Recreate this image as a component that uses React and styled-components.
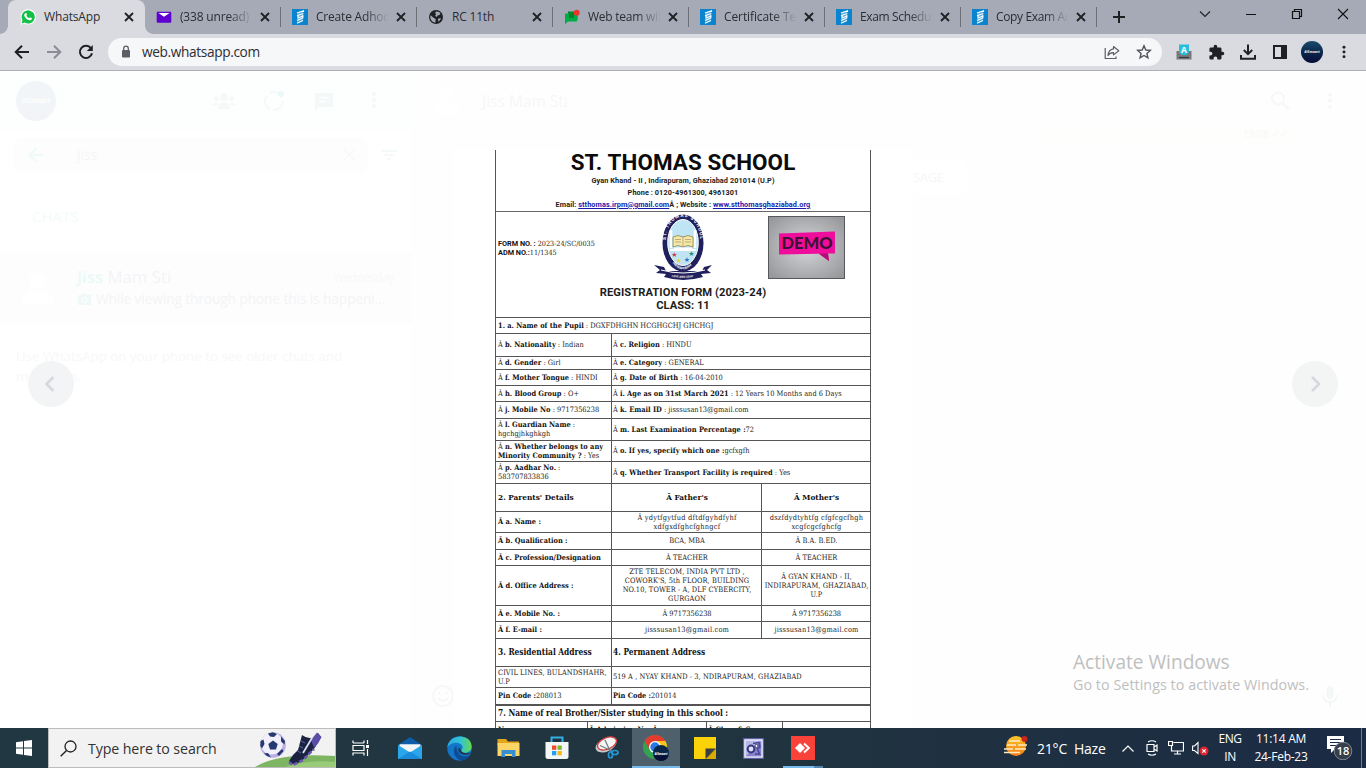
import React from 'react';
import styled, { createGlobalStyle, css } from 'styled-components';

const Global = createGlobalStyle`
  * { box-sizing: border-box; }
  body { margin: 0; background: #fefefe; overflow: hidden; }
`;
const ui = '"Open Sans", "Noto Sans", sans-serif';
const serif = '"DejaVu Serif Condensed", "DejaVu Serif", serif';

const Screen = styled.div`
  width: 1366px; height: 768px; display: flex; flex-direction: column;
  font-family: ${ui}; overflow: hidden; position: relative;
`;

/* ---------- browser ---------- */
const TabStrip = styled.div`
  height: 34px; flex: none; background: #a6aab7; display: flex; padding-left: 8px; align-items: stretch;
`;
const Tab = styled.div`
  width: 136px; flex: none; display: flex; align-items: center; padding: 0 0 0 12px; position: relative;
  ${p => p.$active && css`
    background: #dadbe0; border-radius: 8px 8px 0 0; width: 137px; margin-right: -1px;
    &::before, &::after { content: ''; position: absolute; bottom: 0; width: 8px; height: 8px; }
    &::before { left: -8px; background: radial-gradient(circle at 0 0, transparent 7.5px, #dadbe0 8px); }
    &::after { right: -8px; background: radial-gradient(circle at 100% 0, transparent 7.5px, #dadbe0 8px); }
  `}
  ${p => p.$sep && css`
    &::after { content: ''; position: absolute; right: -1px; top: 7px; height: 20px; width: 1px; background: #6c6f78; }
  `}
`;
const TabTitle = styled.div`
  margin-left: 8px; width: 74px; flex: none; font-size: 12px; line-height: 16px; white-space: nowrap;
  color: #2b2d33; letter-spacing: ${p => p.$ls || 0}px;
  ${p => p.$fade && css`mask-image: linear-gradient(90deg, #000 66%, transparent 98%);`}
`;
const TabClose = styled.div`
  display: flex; margin-left: 2px; width: 18px; justify-content: center;
`;
const NewTab = styled.div`width: 45px; display: flex; align-items: center; justify-content: center;`;
const WindowControls = styled.div`
  margin-left: auto; display: flex; height: 28px; align-items: center;
  svg { width: 46px; }
`;
const Toolbar = styled.div`
  height: 37px; flex: none; background: #dadbe0; border-bottom: 1px solid #adaeb6;
  display: flex; align-items: center; padding: 0 6px;
`;
const ToolCell = styled.div`width: 32px; flex: none; display: flex; align-items: center; justify-content: center;`;
const Omnibox = styled.div`
  flex: 1; height: 28px; border-radius: 14px; background: #f6f7f9; margin: 0 6px;
  display: flex; align-items: center; padding: 0 2px 0 12px;
`;
const Url = styled.div`font-size: 13.7px; line-height: 18px; color: #2c2e33; margin-left: 10px; flex: 1; letter-spacing: -0.37px;`;

/* ---------- faded chat application ---------- */
const Viewport = styled.main`height: 657px; flex: none; position: relative; background: #fefefe; display: flex;`;
const ChatList = styled.section`width: 411px; flex: none; background: #fff; display: flex; flex-direction: column;`;
const ListHeader = styled.header`
  height: 59px; background: #fdfefe; display: flex; align-items: center; padding: 1px 12px 0 16px;
`;
const Avatar = styled.div`
  width: ${p => p.$size}px; height: ${p => p.$size}px; flex: none; border-radius: 50%; overflow: hidden;
  display: flex; align-items: center; justify-content: center;
  background: ${p => p.$ghost ? 'linear-gradient(#f2f5f8 55%, #f3f3f6)' : 'linear-gradient(#174b6c, #0b2548 55%, #080d3a)'};
  color: ${p => p.$ghost ? '#fdfefe' : '#eee'};
  font: italic bold ${p => p.$size / 6.2}px/1 ${ui};
`;
const HeaderIcons = styled.div`margin-left: auto; display: flex; > svg { width: 50px; }`;
const SearchRow = styled.div`height: 49px; display: flex; align-items: center; padding: 0 10px 0 13px; margin-top: 0;`;
const SearchField = styled.div`
  width: 355px; height: 34px; background: #fdfdfd; border-radius: 8px; display: flex; align-items: center; padding: 0 14px 0 15px;
  font-size: 14px; color: #f5f6f6;
  span { margin-left: 33px; flex: 1; }
`;
const FilterIcon = styled.div`margin-left: 13px; display: flex;`;
const SectionLabel = styled.div`height: 72px; padding: 25px 32px 0; font-size: 15px; line-height: 24px; color: #f4fbfa;`;
const ChatRow = styled.div`height: 72px; background: #fdfdfd; display: flex; align-items: center; padding: 2px 17px 0 13px;`;
const Person = styled.div`width: 49px; height: 49px; display: flex; margin-right: 15px;`;
const ChatBody = styled.div`flex: 1; line-height: 22px; white-space: nowrap;`;
const ChatTop = styled.div`display: flex; justify-content: space-between; align-items: center;`;
const ChatName = styled.div`font-size: 16.8px; color: #f3f4f6; b { color: #e9faf6; font-weight: 600; }`;
const Day = styled.div`font-size: 11.7px; letter-spacing: -0.25px; color: #f8f8f9;`;
const Preview = styled.div`font-size: 13.6px; color: #f3f4f5; display: flex; align-items: center; gap: 4px; letter-spacing: -0.05px;`;
const Hint = styled.p`margin: 23px 16px; font-size: 13.4px; line-height: 20px; color: #f7f8f8; width: 340px; letter-spacing: -0.03px;`;
const Conversation = styled.section`flex: 1; display: flex; flex-direction: column;`;
const ConvHeader = styled.header`
  height: 59px; display: flex; align-items: center; padding: 1px 11px 0 16px; font-size: 15.5px; color: #f6f7f7;
  > span { margin-left: 15px; }
`;
const Bubble = styled.div`
  align-self: flex-end; width: 248px; margin-right: 72px; height: 12px; background: #fefefc; text-align: right; padding-right: 7px;
  font-size: 10px; line-height: 8px; color: #f8f8f6;
`;
const Notice = styled.div`
  margin: 18px 0 0 502px; width: 54px; height: 34px; line-height: 35px; background: #fff; border-radius: 0 8px 8px 0;
  font-size: 12.5px; color: #f5f6f8;
`;
const ConvFooter = styled.footer`
  margin-top: auto; height: 64px; display: flex; justify-content: space-between; align-items: center; padding: 0 24px 0 20px;
`;

/* ---------- media viewer ---------- */
const Viewer = styled.div`
  position: absolute; inset: 0; display: flex; justify-content: space-between; align-items: flex-start; padding: 0 28px;
`;
const NavButton = styled.div`
  width: 46px; height: 46px; margin-top: 290px; border-radius: 50%; background: ${p => p.$bg};
  display: flex; align-items: center; justify-content: center;
`;
const Photo = styled.div`width: 460px; height: 578px; margin-top: 79px; background: #fff; display: flex; justify-content: center; overflow: hidden;`;
const Sheet = styled.div`
  width: 376px; height: 600px; flex: none; border: solid #555; border-width: 0 1px; color: #1c1c1c;
  font: 7.4px/9px ${serif}; white-space: nowrap; b { color: #111; }
`;
const Letterhead = styled.div`
  height: 62px; border-bottom: 1px solid #666; text-align: center; font-family: Roboto, sans-serif; font-weight: 700;
`;
const SchoolName = styled.div`font-size: 22.4px; line-height: 24px; color: #0c0c0c; letter-spacing: 0.1px; height: 25px;`;
const HeadLine = styled.div`
  font-size: 7.3px; line-height: 12px; letter-spacing: 0.08px; height: 11.8px;
  a { color: #1a1aae; text-decoration: underline; }
`;
const FormHead = styled.div`
  height: 106px; border-bottom: 1px solid #555; display: flex; flex-direction: column; font-family: Roboto, sans-serif;
`;
const IdRow = styled.div`display: flex; height: 74px; align-items: flex-start;`;
const Ids = styled.div`
  width: 157px; padding: 27px 0 0 2px; font-size: 7.2px; line-height: 9px; font-family: ${serif};
  div { height: 9px; }
  b { font-family: Roboto, sans-serif; font-size: 7.3px; }
`;
const EmblemBox = styled.div`padding-top: 1px; display: flex;`;
const DemoBox = styled.div`margin-left: 55px; margin-top: 4px; display: flex;`;
const FormTitle = styled.div`text-align: center; font-weight: 700; font-size: 11.2px; line-height: 13px; letter-spacing: ${p => p.$ls}px;`;
const Row = styled.div`
  display: grid; grid-template-columns: ${p => p.$cols}; height: ${p => p.$h}px;
  border-bottom: ${p => p.$thick ? 2 : 1}px solid #555;
`;
const Cell = styled.div`
  display: flex; flex-direction: column; justify-content: center; min-width: 0; padding: ${p => p.$center ? '0 0 1px' : '0 0 1px 2px'};
  text-align: ${p => p.$center ? 'center' : 'left'}; letter-spacing: ${p => p.$ls || 0}px;
  font-size: ${p => p.$fs || 7.4}px;
  > span { margin: 0 -4px 0 0; }
  ${p => p.$center && css`> span { margin: 0 -4px; }`}
  & + & { border-left: 1px solid #555; padding-left: ${p => p.$center ? 0 : 1}px; }
`;
const Watermark = styled.div`
  position: absolute; left: 1073px; top: 650px; color: #bfbfbf; white-space: nowrap;
  font-size: 14.3px; line-height: 20px; letter-spacing: 0.05px;
  strong { display: block; font-weight: 400; font-size: 19.1px; line-height: 25px; letter-spacing: 0; }
`;

/* ---------- taskbar ---------- */
const Taskbar = styled.footer`
  height: 40px; flex: none; display: flex; background: linear-gradient(90deg, #213843, #20343f 55%, #1c2b44); color: #fff;
`;
const Start = styled.div`width: 48px; display: flex; align-items: center; justify-content: center;`;
const SearchBox = styled.div`
  width: 288px; background: #f2f2f2; border: 1px solid #bcbcbc; display: flex; align-items: center; padding-left: 11px;
  color: #333; font-size: 14.2px; overflow: hidden;
  span { margin-left: 11px; flex: 1; letter-spacing: -0.1px; white-space: nowrap; }
`;
const Apps = styled.div`display: flex; gap: 1.1px; padding-left: 1px;`;
const TaskButton = styled.div`
  width: 48px; display: flex; align-items: center; justify-content: center; position: relative;
  background: ${p => p.$active ? '#4e606b' : 'none'};
  ${p => p.$line && css`
    &::after { content: ''; position: absolute; bottom: 0; height: 2px; left: ${p.$active ? 0 : 4}px; width: ${p.$active ? 48 : 40}px;
      background: ${p.$active ? '#76b9ed' : 'linear-gradient(90deg, #76b9ed 31px, #5485ae 31px)'}; }
  `}
`;
const Tray = styled.div`margin-left: auto; display: flex; align-items: center; font-size: 12px;`;
const Weather = styled.div`display: flex; align-items: center; font-size: 14px; width: 112px; gap: 9px; white-space: nowrap; letter-spacing: -0.2px;`;
const TrayIcon = styled.div`width: ${p => p.$w}px; display: flex; justify-content: center;`;
const Stack = styled.div`
  width: ${p => p.$w}px; text-align: center; line-height: 18px; font-size: 12px; letter-spacing: ${p => p.$ls}px; white-space: nowrap;
`;
const Notifications = styled.div`width: 47px; height: 40px; display: flex; justify-content: center; align-items: center; padding-left: 4px;`;
const Peek = styled.div`width: 5px; height: 40px; border-left: 1px solid #707c8c;`;

/* ---------- drawings ---------- */
const X = ({ c = '#1f2023', s = 8, w = 1.8 }) => (
  <svg width={s} height={s} viewBox="0 0 8 8" overflow="visible"><path d="M0 0 8 8M8 0 0 8" stroke={c} strokeWidth={w} /></svg>
);
const WhatsAppIcon = () => (
  <svg width="16" height="16" viewBox="0 0 16 16">
    <path d="M.4 15.7 1.6 11.6A7.7 7.7 0 1 1 4.600 14.600Z" fill="#fff" />
    <path d="M1.600 14.500 2.500 11.300A6.600 6.600 0 1 1 4.800 13.600Z" fill="#13c047" />
    <path d="M5.300 4.200c.5-.4 1-.3 1.200.2l.5 1.200c.1.400-.5.900-.6 1.100.6 1.200 1.500 2 2.700 2.500.3-.1.700-1 1.100-.8l1.400.7c.5.300.2 1.200-.2 1.600-.5.500-1.300.7-2 .6-2.700-.6-4.700-2.700-5.200-4.700-.1-.8.400-1.800 1.100-2.400Z" fill="#fff" />
  </svg>
);
const MailFav = () => (
  <svg width="16" height="16" viewBox="0 0 16 16"><rect x=".7" y="2.700" width="14.600" height="11" rx="1" fill="#5f01d1" /><path d="M2.500 4h11L8 7.800Z" fill="#fff" /></svg>
);
const BookFav = () => (
  <svg width="16" height="16" viewBox="0 0 16 16"><rect width="16" height="16" fill="#0a84cf" />
    <path d="M5.300 4.800V3.500L11.300 1.700V11L5.300 14Z" fill="#4ba8e0" />
    <path d="M5 4 11.500 1.900V3M5 6.700 11.300 4.500M6.200 5.600V8M5.300 9.300 11 7M5 11.500 10.800 9M5 14.200 11 11.500M10.800 6V9" stroke="#fff" strokeWidth="1.150" fill="none" /></svg>
);
const GlobeFav = () => (
  <svg width="16" height="16" viewBox="0 0 16 16"><circle cx="8" cy="8" r="7" fill="#202124" />
    <path d="M2.600 6.300 5.500 8.700 7.700 9.900 7.300 13.600C4.500 13.200 2.300 10.600 2.300 7.900ZM8.200 2.600c1.500-.2 3.300.5 4.300 1.900L11.400 6.100 9.500 6.600 8.900 8 7 6.700 8.300 5.200 7 4ZM10 9.700 12.900 9.100c-.4 1.700-1.400 3-2.600 3.700Z" fill="#a6aab7" /></svg>
);
const ChatFav = () => (
  <svg width="16" height="16" viewBox="0 0 16 16"><path d="M4 2.500h9.500v8.500H4Z" fill="#00832d" /><path d="M1 4.500h12v8H4L1 15.300Z" fill="#00ac47" /><path d="M5 3h5v6H5Z" fill="#00832d" /><circle cx="12.700" cy="3.700" r="3" fill="#e8372c" /></svg>
);
const Arrow = ({ c, flip }) => (
  <svg width="16" height="16" viewBox="0 0 16 16"><path d={flip ? 'M1 8h13M8 1.700 14.300 8 8 14.300' : 'M15 8H2M8 1.700 1.700 8 8 14.300'} fill="none" stroke={c} strokeWidth="2" /></svg>
);
const Dots = ({ c, s = 16 }) => (
  <svg width={s} height={s} viewBox="0 0 16 16"><g fill={c}><circle cx="8" cy="2.500" r="1.700" /><circle cx="8" cy="8" r="1.700" /><circle cx="8" cy="13.500" r="1.700" /></g></svg>
);
const Chevron = ({ right, c }) => (
  <svg width="16" height="18" viewBox="0 0 16 18"><path d={right ? 'M5 2 12 9 5 16' : 'M10.500 2 3.500 9 10.500 16'} fill="none" stroke={c} strokeWidth="2.600" /></svg>
);
const PersonIcon = () => (
  <svg width="49" height="49" viewBox="0 0 49 49"><circle cx="24.500" cy="24.500" r="24.500" fill="#fdfdfd" /><circle cx="24.500" cy="17" r="8" fill="#fff" /><path d="M8 40c0-9 7-13 16.500-13S41 31 41 40" fill="#fff" /></svg>
);
const Emblem = () => (
  <svg width="60" height="67" viewBox="0 0 60 67">
    <path d="M1 52 11 54 13 58 49 58 51 54 59 52 54 57 58 60 48 61 50 64Q30 70 11 64L13 61 3 60 7 57Z" fill="#20205e" />
    <path d="M8 57Q30 63 52 57" fill="none" stroke="#fff" strokeWidth="1" />
    <ellipse cx="30" cy="30" rx="20.500" ry="28.500" fill="#20205e" />
    <ellipse cx="30" cy="29.500" rx="15.300" ry="23" fill="#bfe5f5" stroke="#fff" />
    <path id="arcTop" d="M13 36C8-7 52-7 47 36" fill="none" />
    <path id="arcLow" d="M15 43Q30 70 45 43" fill="none" />
    <path id="ribbon" d="M12 62.500Q30 67 48 62.500" fill="none" />
    <g fill="#fff" fontFamily="Roboto, sans-serif" fontWeight="700">
      <text fontSize="4.600"><textPath href="#arcTop" startOffset="9" textLength="63">ST. THOMAS SCHOOL</textPath></text>
      <text fontSize="3.400"><textPath href="#arcLow" startOffset="8">INDIRAPURAM</textPath></text>
      <text fontSize="2.800"><textPath href="#ribbon" startOffset="7">LOVE AND LIGHT</textPath></text>
    </g>
    <path d="M18 17v18M42 17v18" stroke="#fff" strokeWidth="2.500" />
    <path d="M20 24Q25 21 30 24Q35 21 40 24V34Q35 31 30 34Q25 31 20 34Z" fill="#f6e7a6" stroke="#8c8350" strokeWidth=".8" />
    <path d="M30 24v10M22 26.500h6M22 29h6M32 26.500h6M32 29h6" stroke="#938963" strokeWidth=".6" />
    <path d="M17 37H43M21 35.500h18" stroke="#fff" strokeWidth="2" />
    <g fontSize="7" fontFamily="DejaVu Sans, sans-serif" textAnchor="middle">
      <text x="21.500" y="43.500" fill="#cf3b48">★</text><text x="38.500" y="43" fill="#2c8b6b">★</text>
      <text x="26" y="49.500" fill="#e4d33a">★</text><text x="34" y="49" fill="#2b72c4">★</text>
    </g>
  </svg>
);
const Demo = () => (
  <svg width="77" height="63" viewBox="0 0 77 63">
    <defs><radialGradient id="demoBg" cx=".5" cy=".5" r=".65"><stop offset="0" stopColor="#d4d6d8" /><stop offset="1" stopColor="#96989b" /></radialGradient></defs>
    <rect x=".5" y=".5" width="76" height="62" fill="url(#demoBg)" stroke="#56585a" />
    <path d="M11 17.500 67 15.500V37.500H60L61 45 51 37.800 11 38.500Z" fill="#ef0d9c" />
    <path d="M51 37.800 61 45 60 37.500Z" fill="#b50b78" />
    <text x="39" y="33.300" textAnchor="middle" textLength="51" lengthAdjust="spacingAndGlyphs" fontFamily="Lato, sans-serif" fontWeight="900" fontSize="17.500" fill="#3d1135">DEMO</text>
  </svg>
);
const SearchArt = () => (
  <svg width="80" height="38" viewBox="0 0 80 38">
    <path d="M0 38Q24 23 80 27V38Z" fill="#7db563" /><path d="M30 38Q54 30 80 33V38Z" fill="#9acb78" />
    <circle cx="18" cy="16" r="12.800" fill="#b9aee4" /><circle cx="16.800" cy="14.500" r="11" fill="#f0effb" />
    <g fill="#24396f"><path d="M18 11.500 22.700 15 21 20.500H15L13.300 15Z" /><path d="M13 4.500 18 3.200 22 5 19 8 15 7.500Z" /><path d="M5.500 12 8.500 10.500 9.500 15 7 19.500 5.300 17Z" /><path d="M26 7.500 30 12 29.500 15.500 26 12.500Z" /><path d="M9 24.500 13 24 16 28.500 12 27Z" /><path d="M22 25 27 20 28.500 22 24 27Z" /></g>
    <path d="M34 32Q37 26 43 21L47 6Q52 10 58 9L63 4 66 8Q63 14 59 20L50 29Q42 36 37 35Z" fill="#1b2340" />
    <path d="M56 11 62 3.500 66.500 8Q64 14 59 19Z" fill="#5a4ca8" />
    <path d="M57 9 48 24" stroke="#d8dcf5" strokeWidth="1.800" />
    <path d="M46 12 50 14M44 17 48 19M42 21.500 46 24" stroke="#5c68a8" strokeWidth="1" />
    <path d="M34 33 38 36 48 31 59 20" stroke="#6c55b5" strokeWidth="2.500" fill="none" strokeDasharray="4 2" />
  </svg>
);
const TaskView = () => (
  <svg width="18" height="16" viewBox="0 0 18 16"><path d="M1 .5V3M12 .5V3M1 3H12M1 5.500H12V10.500H1ZM1 15.500V13H12V15.500M15.500 0V4M15.500 9V16" stroke="#fff" strokeWidth="1.200" fill="none" /><rect x="14" y="5" width="3" height="3" fill="#fff" /></svg>
);
const MailApp = () => (
  <svg width="24" height="24" viewBox="0 0 24 24"><path d="M0 9 12 1 24 9V13H0Z" fill="#0f5cab" /><path d="M1.500 8.500H22.500V12L12 18 1.500 12Z" fill="#eef1f4" /><path d="M0 9V23H24V9L12 16.500Z" fill="#2aa6ea" /><path d="M1.500 8.500H22.500L12 15.800Z" fill="#f4f5f7" /><path d="M0 23 12 15.500 24 23Z" fill="#1b8bdc" /></svg>
);
const Edge = () => (
  <svg width="25" height="25" viewBox="0 0 24 24">
    <defs><linearGradient id="eg" x1="0" x2="1"><stop offset="0" stopColor="#2ca9e3" /><stop offset=".55" stopColor="#33c3d4" /><stop offset="1" stopColor="#66d84e" /></linearGradient></defs>
    <circle cx="12" cy="12" r="11.700" fill="#1376c8" />
    <path d="M.3 11C1.500-3 23.700-3 23.700 10c0 4-3.200 6-6.500 6-2.200 0-3.500-.8-3.500-2 0-.8 1.300-1.300 1.300-3C15 5.500 4 4.500.3 11Z" fill="url(#eg)" />
    <path d="M9 9C4 13 7 22 14 23.500 18.500 22.800 21 20.500 22 18.500 13 21.500 9.500 16 9 9Z" fill="#0d4d98" />
    <path d="M11.500 10.500c-1.500 3 0 6.500 5 7.500 3.500.3 5.500-1 6.500-2.500C20 17 14 17 13.500 14Z" fill="#20343f" />
  </svg>
);
const Folder = () => (
  <svg width="23" height="20" viewBox="0 0 23 20"><path d="M.5 1H9L11 3.500H22V7H.5Z" fill="#e3a51c" /><path d="M.5 5H22.500V18H.5Z" fill="#fbd667" /><path d="M4.500 19V12H18.500V19H15V16H8V19Z" fill="#368fd3" /></svg>
);
const Store = () => (
  <svg width="24" height="24" viewBox="0 0 24 24"><path d="M6.500 6V1.500H17.500V6" fill="none" stroke="#33afe2" strokeWidth="2" /><path d="M.5 6H23.500V20.500Q23.500 23 21 23H3Q.5 23 .5 20.500Z" fill="#f3f5f7" /><path d="M7 9.500h4.300v4.300H7Z" fill="#f04d26" /><path d="M12.500 9.500h4.300v4.300h-4.300Z" fill="#7fb92c" /><path d="M7 15h4.300v4.300H7Z" fill="#22a2e9" /><path d="M12.500 15h4.300v4.300h-4.300Z" fill="#f9b911" /></svg>
);
const Snip = () => (
  <svg width="25" height="24" viewBox="0 0 25 24"><ellipse cx="12" cy="9" rx="11" ry="6.500" transform="rotate(-24 12 9)" fill="#c7cdd0" /><ellipse cx="13" cy="7.500" rx="10" ry="5.700" transform="rotate(-24 13 7.500)" fill="#f4f5f5" stroke="#d2403f" strokeWidth="1.400" /><path d="M11 4 16.500 16M6 9.500 18 15" stroke="#777c82" strokeWidth="1.300" /><ellipse cx="16.500" cy="19" rx="2" ry="3" fill="none" stroke="#2496d3" strokeWidth="1.700" /><ellipse cx="21" cy="16.500" rx="3" ry="2" fill="none" stroke="#2496d3" strokeWidth="1.700" /></svg>
);
const Chrome = () => (
  <svg width="26" height="26" viewBox="0 0 26 26">
    <circle cx="12" cy="12" r="12" fill="#32a350" /><path d="M1.600 6A12 12 0 0 1 22.400 6H12L6.800 15Z" fill="#e33b2e" /><path d="M12 6H22.400A12 12 0 0 1 12 24L17.200 15Z" fill="#fbc31d" /><circle cx="12" cy="12" r="6" fill="#fff" /><circle cx="12" cy="12" r="4.700" fill="#2a78e6" />
    <circle cx="18" cy="18" r="8" fill="#092849" /><path d="M10.500 20.500h15A8 8 0 0 1 10.500 20.500Z" fill="#071036" /><text x="18" y="19.500" textAnchor="middle" fontSize="3" fontStyle="italic" fontWeight="700" fill="#fff" fontFamily="Open Sans">#iSmaart</text>
  </svg>
);
const Notes = () => <svg width="22" height="22" viewBox="0 0 22 22"><path d="M0 0H22V11.500L12 22H0Z" fill="#fbd20a" /><path d="M11.500 22V11.500H22Z" fill="#3a3f42" /><path d="M12 22 22 11.500V22Z" fill="#dca900" /></svg>;
const Gear = () => (
  <svg width="21" height="21" viewBox="0 0 21 21"><rect x=".7" y=".7" width="19.600" height="19.600" fill="#b5b8e6" stroke="#6460ab" strokeWidth="1.200" /><path d="M2 19H19V2Z" fill="#8583c9" /><rect x="2" y="2" width="17" height="17" fill="none" stroke="#f2f2fd" strokeWidth="1.200" /><circle cx="8" cy="11" r="3.400" fill="#dfe1f8" stroke="#38367f" strokeWidth="2" /><path d="M10 5.500 16 4.500 17 9 14.500 11 16.500 16 12 16" fill="none" stroke="#4b489a" strokeWidth="1.600" /><circle cx="13.500" cy="8" r="1.600" fill="#f3f4fe" stroke="#403d8d" /></svg>
);
const AnyDesk = () => <svg width="24" height="24" viewBox="0 0 24 24"><rect width="24" height="24" fill="#f9423a" /><path d="M4 12 9 7 14 12 9 17Z" fill="#fff" /><path d="M13 7.500 17.800 12 13 16.500" fill="none" stroke="#fff" strokeWidth="2" /></svg>;

const tabs = [
  ['WhatsApp', WhatsAppIcon, -0.15], ['(338 unread) -', MailFav, -0.18, 1], ['Create Adhoc', BookFav, -0.2, 1], ['RC 11th', GlobeFav, -0.2],
  ['Web team wit', ChatFav, -0.25, 1], ['Certificate Ter', BookFav, -0.1, 1], ['Exam Schedul', BookFav, -0.35, 1], ['Copy Exam Ac', BookFav, -0.35, 1],
];

const Two = '115px 1fr';
const Three = '115px 150px 1fr';
const A = 'Â ';

const FormRows = () => (
  <>
    <Row $cols="1fr" $h={16}><Cell><span><b>1. a. Name of the Pupil</b> : DGXFDHGHN HCGHGCHJ GHCHGJ</span></Cell></Row>
    {[
      [23, [<span>{A}<b>b. Nationality</b> : Indian</span>], [<span>{A}<b>c. Religion</b> : HINDU</span>]],
      [13, [<span>{A}<b>d. Gender</b> : Girl</span>], [<span>{A}<b>e. Category</b> : GENERAL</span>]],
      [16, [<span>{A}<b>f. Mother Tongue</b> : HINDI</span>], [<span>{A}<b>g. Date of Birth</b> : 16-04-2010</span>]],
      [16, [<span>{A}<b>h. Blood Group</b> : O+</span>], [<span>{A}<b>i. Age as on 31st March 2021</b> : 12 Years 10 Months and 6 Days</span>]],
      [17, [<span>{A}<b>j. Mobile No</b> : 9717356238</span>], [<span>{A}<b>k. Email ID</b> : jisssusan13@gmail.com</span>]],
      [22, [<span>{A}<b>l. Guardian Name</b> :</span>, <span>hgchgjhkghkgh</span>], [<span>{A}<b>m. Last Examination Percentage :</b>72</span>]],
      [21, [<span>{A}<b>n. Whether belongs to any</b></span>, <span><b>Minority Community ?</b> : Yes</span>], [<span>{A}<b>o. If yes, specify which one :</b>gcfxgfh</span>]],
      [22, [<span>{A}<b>p. Aadhar No.</b> :</span>, <span>583707833836</span>], [<span>{A}<b>q. Whether Transport Facility is required</b> : Yes</span>]],
    ].map(([h, l, r], i) => (
      <Row key={i} $cols={Two} $h={h}>
        <Cell>{React.Children.toArray(l)}</Cell><Cell>{React.Children.toArray(r)}</Cell>
      </Row>
    ))}
    <Row $cols={Three} $h={28}>
      <Cell $fs={8.2}><b>2. Parents' Details</b></Cell><Cell $fs={8.2} $center><b>Â Father's</b></Cell><Cell $fs={8.2} $center><b>Â Mother's</b></Cell>
    </Row>
    {[
      [21, 'a. Name :', ['Â ydytfgytfud dftdfgyhdfyhf', 'xdfgxdfghcfghngcf'], ['dszfdydtyhtfg cfgfcgcfhgh', 'xcgfcgcfghcfg'], 0.22],
      [17, 'b. Qualification :', ['BCA, MBA'], ['Â B.A. B.ED.']],
      [16, 'c. Profession/Designation', ['Â TEACHER'], ['Â TEACHER']],
      [40, 'd. Office Address :', ['ZTE TELECOM, INDIA PVT LTD ,', 'COWORK\'S, 5th FLOOR, BUILDING', 'NO.10, TOWER - A, DLF CYBERCITY,', 'GURGAON'], ['Â GYAN KHAND - II,', 'INDIRAPURAM, GHAZIABAD,', 'U.P'], 0.08],
      [16, 'e. Mobile No. :', ['Â 9717356238'], ['Â 9717356238']],
      [17, 'f. E-mail :', ['jisssusan13@gmail.com'], ['jisssusan13@gmail.com'], 0.18],
    ].map(([h, label, f, m, ls]) => (
      <Row key={label} $cols={Three} $h={h}>
        <Cell><b>Â {label}</b></Cell>
        <Cell $center $ls={ls}>{f.map(t => <span key={t}>{t}</span>)}</Cell>
        <Cell $center $ls={ls}>{m.map(t => <span key={t}>{t}</span>)}</Cell>
      </Row>
    ))}
    <Row $cols={Two} $h={28}><Cell $fs={8.3}><b>3. Residential Address</b></Cell><Cell $fs={8.3}><b>4. Permanent Address</b></Cell></Row>
    <Row $cols={Two} $h={21}><Cell $ls={0.07}><span>CIVIL LINES, BULANDSHAHR,</span><span>U.P</span></Cell><Cell $ls={0.07}>519 A , NYAY KHAND - 3, NDIRAPURAM, GHAZIABAD</Cell></Row>
    <Row $cols={Two} $h={18} $thick><Cell><span><b>Pin Code :</b>208013</span></Cell><Cell><span><b>Pin Code :</b>201014</span></Cell></Row>
    <Row $cols="1fr" $h={16}><Cell $fs={8.3}><b>7. Name of real Brother/Sister studying in this school :</b></Cell></Row>
    <Row $cols="91px 119px 76px 1fr" $h={16}><Cell><b>Name :</b></Cell><Cell><b>Â Admission No. Â :</b></Cell><Cell><b>Â Class &amp; Sec. :</b></Cell><Cell /></Row>
  </>
);

export default function App() {
  const g = '#f4f8f8';
  return (
    <Screen>
      <Global />
      <TabStrip>
        {tabs.map(([t, Icon, ls, fade], i) => (
          <Tab key={t} $active={i === 0} $sep={i > 0}>
            <Icon /><TabTitle $ls={ls} $fade={fade}>{t}</TabTitle><TabClose><X /></TabClose>
          </Tab>
        ))}
        <NewTab><svg width="12" height="12" viewBox="0 0 12 12"><path d="M6 0V12M0 6H12" stroke="#1f2023" strokeWidth="2" /></svg></NewTab>
        <WindowControls>
          <svg height="12" viewBox="-23 -6 46 12"><path d="M-5-2.500 0 2.500 5-2.500" fill="none" stroke="#1f2023" strokeWidth="1.100" /></svg>
          <svg height="12" viewBox="-23 -6 46 12"><path d="M-5 .5H5" stroke="#111" /></svg>
          <svg height="12" viewBox="-23 -6 46 12"><path d="M-4.500-2.500H2.500V4.500H-4.500ZM-2.500-2.500V-4.500H4.500V2.500H2.500" fill="none" stroke="#111" strokeWidth="1.200" /></svg>
          <svg height="12" viewBox="-23 -6 46 12"><path d="M-5-5 5 5M5-5-5 5" stroke="#111" strokeWidth="1.100" /></svg>
        </WindowControls>
      </TabStrip>
      <Toolbar>
        <ToolCell><Arrow c="#1f2023" /></ToolCell>
        <ToolCell><Arrow c="#8b8d94" flip /></ToolCell>
        <ToolCell><svg width="16" height="16" viewBox="0 0 16 16"><path d="M13 4.300A6.100 6.100 0 1 0 14 9.300" fill="none" stroke="#1f2023" strokeWidth="2" /><path d="M14.800 1V7H8.800Z" fill="#1f2023" /></svg></ToolCell>
        <Omnibox>
          <svg width="12" height="14" viewBox="0 0 12 14"><rect x="2" y="5" width="8" height="7.500" rx="1" fill="#5b5e64" /><path d="M3.700 5V3.500a2.300 2.300 0 0 1 4.600 0V5" fill="none" stroke="#5b5e64" strokeWidth="1.300" /></svg>
          <Url>web.whatsapp.com</Url>
          <ToolCell><svg width="16" height="16" viewBox="0 0 16 16"><path d="M1.200 4V14.500H12V12.500" fill="none" stroke="#5b5e64" strokeWidth="1.200" /><path d="M9.500 2.500 14.800 6.700 9.500 10.900V8.700Q6 8.500 4 11.500 4.700 5.500 9.500 4.900Z" fill="none" stroke="#5b5e64" strokeWidth="1.200" strokeLinejoin="round" /></svg></ToolCell>
          <ToolCell><svg width="16" height="16" viewBox="0 0 16 16"><path d="M8 1.800 9.800 6 14.300 6.400 10.900 9.400 11.900 13.900 8 11.500 4.100 13.900 5.100 9.400 1.700 6.400 6.200 6Z" fill="none" stroke="#4f5258" strokeWidth="1.400" /></svg></ToolCell>
        </Omnibox>
        <ToolCell><svg width="16" height="16" viewBox="0 0 16 16"><path d="M.5 7H15.500V15.500H.5Z" fill="#77797d" /><path d="M3 .500H13V8L10.500 11H5.500L3 8Z" fill="#29bfdc" /><text x="8" y="8.700" textAnchor="middle" fontSize="8.500" fontWeight="700" fill="#fff" fontFamily="Open Sans">A</text><path d="M3 13.500H13" stroke="#35373a" strokeWidth="1.200" /></svg></ToolCell>
        <ToolCell><svg width="17" height="17" viewBox="0 0 24 24"><path d="M20.500 11H19V7a2 2 0 0 0-2-2h-4V3.500a2.500 2.500 0 0 0-5 0V5H4a2 2 0 0 0-2 2v3.800h1.500a2.700 2.700 0 0 1 0 5.400H2V20a2 2 0 0 0 2 2h3.800v-1.500a2.700 2.700 0 0 1 5.400 0V22H17a2 2 0 0 0 2-2v-4h1.500a2.500 2.500 0 0 0 0-5Z" fill="#1f2023" /></svg></ToolCell>
        <ToolCell><svg width="16" height="16" viewBox="0 0 16 16"><path d="M8 .500V10M3.800 6 8 10.200 12.200 6M1 11V14.800H15V11" fill="none" stroke="#1f2023" strokeWidth="2" /></svg></ToolCell>
        <ToolCell><svg width="14" height="14" viewBox="0 0 14 14"><rect x="1" y="1" width="12" height="12" fill="none" stroke="#1f2023" strokeWidth="2" /><path d="M8 1H13V13H8Z" fill="#1f2023" /></svg></ToolCell>
        <ToolCell><Avatar $size={22}>#iSmaart</Avatar></ToolCell>
        <ToolCell><Dots c="#1f2023" s={14} /></ToolCell>
      </Toolbar>

      <Viewport>
        <ChatList>
          <ListHeader>
            <Avatar $size={40} $ghost>#iSmaart</Avatar>
            <HeaderIcons>
              <svg height="20" viewBox="-25 -10 50 20"><g fill={g}><circle cy="-4" r="3.700" /><circle cx="-7.500" cy="-2.500" r="2.300" /><circle cx="7.500" cy="-2.500" r="2.300" /><path d="M-6.500 8Q-6 1.500 0 1.500T6.500 8ZM-12 4.500Q-11 1.500-6 2L-8 4.500ZM12 4.500Q11 1.500 6 2L8 4.500Z" /></g></svg>
              <svg height="20" viewBox="-25 -10 50 20"><circle r="9" fill="none" stroke={g} strokeWidth="1.800" strokeDasharray="15 3.850" /><circle cx="7" cy="-7" r="3" fill="#e9f8f8" /></svg>
              <svg height="20" viewBox="-25 -10 50 20"><path d="M-9-8H9V6H-5L-9 10Z" fill={g} /><path d="M-5-3.500H5M-5 .500H2" stroke="#fff" strokeWidth="1.500" /></svg>
              <svg height="20" viewBox="-25 -10 50 20"><g fill={g}><circle cy="-7" r="2" /><circle cy="-1" r="2" /><circle cy="5" r="2" /></g></svg>
            </HeaderIcons>
          </ListHeader>
          <SearchRow>
            <SearchField><Arrow c="#eefaf8" /><span>jiss</span><X c="#f6f7f7" s={10} w={1} /></SearchField>
            <FilterIcon><svg width="16" height="10" viewBox="0 0 16 10"><path d="M0 1H16M3 5H13M6.500 9H9.500" stroke="#f2f9f8" strokeWidth="1.500" /></svg></FilterIcon>
          </SearchRow>
          <SectionLabel>CHATS</SectionLabel>
          <ChatRow>
            <Person><PersonIcon /></Person>
            <ChatBody>
              <ChatTop><ChatName><b>Jiss</b> Mam Sti</ChatName><Day>Wednesday</Day></ChatTop>
              <Preview>
                <svg width="15" height="13" viewBox="0 0 15 13"><path d="M1 2H4L5.500.500H9.500L11 2H14V12H1Z" fill="#f1f9f8" /><circle cx="7.500" cy="7" r="2.600" fill="none" stroke="#fff" /></svg>
                While viewing through phone this is happeni...
              </Preview>
            </ChatBody>
          </ChatRow>
          <Hint>Use WhatsApp on your phone to see older chats and messages.</Hint>
        </ChatList>
        <Conversation>
          <ConvHeader>
            <svg width="40" height="40" viewBox="0 0 49 49"><circle cx="24.500" cy="17" r="8" fill="#fff" /><path d="M8 40c0-9 7-13 16.500-13S41 31 41 40" fill="#fff" /></svg>
            <span>Jiss Mam Sti</span>
            <HeaderIcons>
              <svg height="20" viewBox="-25 -10 50 20"><circle cx="-2" cy="-2.500" r="6" fill="none" stroke="#f6f8f8" strokeWidth="2" /><path d="M2 2 9 8.500" stroke="#f6f8f8" strokeWidth="2.500" /></svg>
              <svg height="20" viewBox="-25 -10 50 20"><g fill="#f6f8f8"><circle cy="-6.500" r="2" /><circle cy="-.500" r="2" /><circle cy="5.500" r="2" /></g></svg>
            </HeaderIcons>
          </ConvHeader>
          <Bubble>13:08 ✓✓</Bubble>
          <Notice>SAGE</Notice>
          <ConvFooter>
            <svg width="24" height="24" viewBox="0 0 24 24" fill="none" stroke="#f6f8f8" strokeWidth="2"><circle cx="12" cy="12" r="10" /><path d="M7 14Q12 20 17 14M8 8v2M16 8v2" /></svg>
            <svg width="24" height="24" viewBox="0 0 24 24" fill="none" stroke="#f4f7f7" strokeWidth="1.800"><rect x="9.500" y="3" width="5" height="11" rx="2.500" fill="#f6f8f8" /><path d="M5 11Q5 18 12 18T19 11M12 18V23" /></svg>
          </ConvFooter>
        </Conversation>

        <Viewer>
          <NavButton $bg="#f3f4f6"><Chevron c="#d5dade" /></NavButton>
          <Photo>
            <Sheet>
              <Letterhead>
                <SchoolName>ST. THOMAS SCHOOL</SchoolName>
                <HeadLine>Gyan Khand - II , Indirapuram, Ghaziabad 201014 (U.P)</HeadLine>
                <HeadLine>Phone : 0120-4961300, 4961301</HeadLine>
                <HeadLine><span>Email: <a>stthomas.irpm@gmail.com</a>Â ; Website : <a>www.stthomasghaziabad.org</a></span></HeadLine>
              </Letterhead>
              <FormHead>
                <IdRow>
                  <Ids><div><b>FORM NO. :</b> 2023-24/SC/0035</div><div><b>ADM NO.:</b>11/1345</div></Ids>
                  <EmblemBox><Emblem /></EmblemBox>
                  <DemoBox><Demo /></DemoBox>
                </IdRow>
                <FormTitle $ls={0.05}>REGISTRATION FORM (2023-24)</FormTitle>
                <FormTitle $ls={0}>CLASS: 11</FormTitle>
              </FormHead>
              <FormRows />
            </Sheet>
          </Photo>
          <NavButton $bg="#f3f5f5"><Chevron right c="#d5d8de" /></NavButton>
        </Viewer>
      </Viewport>
      <Watermark><strong>Activate Windows</strong>Go to Settings to activate Windows.</Watermark>

      <Taskbar>
        <Start><svg width="16" height="16" viewBox="0 0 16 16"><path d="M0 2.200 7 1.200V7.500H0ZM8 1.100 16 0V7.500H8ZM0 8.500H7V14.800L0 13.800ZM8 8.500H16V16L8 14.900Z" fill="#fff" /></svg></Start>
        <SearchBox>
          <svg width="17" height="17" viewBox="0 0 17 17"><circle cx="10.500" cy="6.500" r="5.500" fill="none" stroke="#222" strokeWidth="1.300" /><path d="M6.500 10.500 .700 16.300" stroke="#222" strokeWidth="1.400" /></svg>
          <span>Type here to search</span>
          <SearchArt />
        </SearchBox>
        <Apps>
          <TaskButton><TaskView /></TaskButton><TaskButton><MailApp /></TaskButton><TaskButton><Edge /></TaskButton><TaskButton><Folder /></TaskButton><TaskButton><Store /></TaskButton><TaskButton><Snip /></TaskButton>
          <TaskButton $active $line><Chrome /></TaskButton><TaskButton><Notes /></TaskButton><TaskButton><Gear /></TaskButton><TaskButton $line><AnyDesk /></TaskButton>
        </Apps>
        <Tray>
          <Weather>
            <svg width="24" height="24" viewBox="0 0 24 24"><defs><linearGradient id="sun" x1="0" x2="0" y1="0" y2="1"><stop offset="0" stopColor="#fcc52b" /><stop offset="1" stopColor="#f07d16" /></linearGradient></defs><circle cx="12" cy="10" r="10" fill="url(#sun)" /><path d="M5 5H16M3 9H12M14 9H23M0 13H9M11 13H22M0 16.500H16" stroke="#ffecc4" strokeWidth="1.700" /><circle cx="20.500" cy="3" r="3" fill="#c9251f" /></svg>
            <span>21°C&nbsp;&nbsp;Haze</span>
          </Weather>
          <TrayIcon $w={24}><svg width="12" height="7" viewBox="0 0 12 7"><path d="M.500 6.500 6 1 11.500 6.500" fill="none" stroke="#fff" strokeWidth="1.200" /></svg></TrayIcon>
          <TrayIcon $w={24}><svg width="12" height="16" viewBox="0 0 12 16"><path d="M2 2Q6-.500 10 2M2 14Q6 16.500 10 14M1 4.500H8V11.500H1ZM8 7 11 5V11L8 9" fill="none" stroke="#fff" strokeWidth="1.200" /></svg></TrayIcon>
          <TrayIcon $w={24}><svg width="16" height="14" viewBox="0 0 16 14"><path d="M5.500 1.500H15.500V10H3.500V5M9.500 10V13M6 13H13M.500.500H4.500V4.500H.500Z" fill="none" stroke="#fff" strokeWidth="1.200" /></svg></TrayIcon>
          <TrayIcon $w={24}><svg width="17" height="15" viewBox="0 0 17 15"><path d="M.600 5H2.500L6 1.500V12.500L2.500 9.500H.600Z" fill="none" stroke="#fff" strokeWidth="1.100" /><circle cx="12" cy="10" r="4.500" fill="#dc2430" /><path d="M10.300 8.300 13.700 11.700M13.700 8.300 10.300 11.700" stroke="#fff" strokeWidth="1.200" /></svg></TrayIcon>
          <Stack $w={36} $ls={-0.4}>ENG<br />IN</Stack>
          <Stack $w={66} $ls={-0.25}>11:14 AM<br />24-Feb-23</Stack>
          <Notifications><svg width="26" height="24" viewBox="0 0 26 24"><path d="M0 0H17V13H8L4 17V13H0Z" fill="#fff" /><path d="M3 3.500H14M3 6.500H14M3 9.500H11" stroke="#1c2b44" strokeWidth="1.200" /><circle cx="16" cy="15" r="8.800" fill="#363f4b" stroke="#7d8790" /><text x="16" y="19" textAnchor="middle" fontSize="11" fill="#fff" fontFamily="Open Sans" fontWeight="600">18</text></svg></Notifications>
          <Peek />
        </Tray>
      </Taskbar>
    </Screen>
  );
}
